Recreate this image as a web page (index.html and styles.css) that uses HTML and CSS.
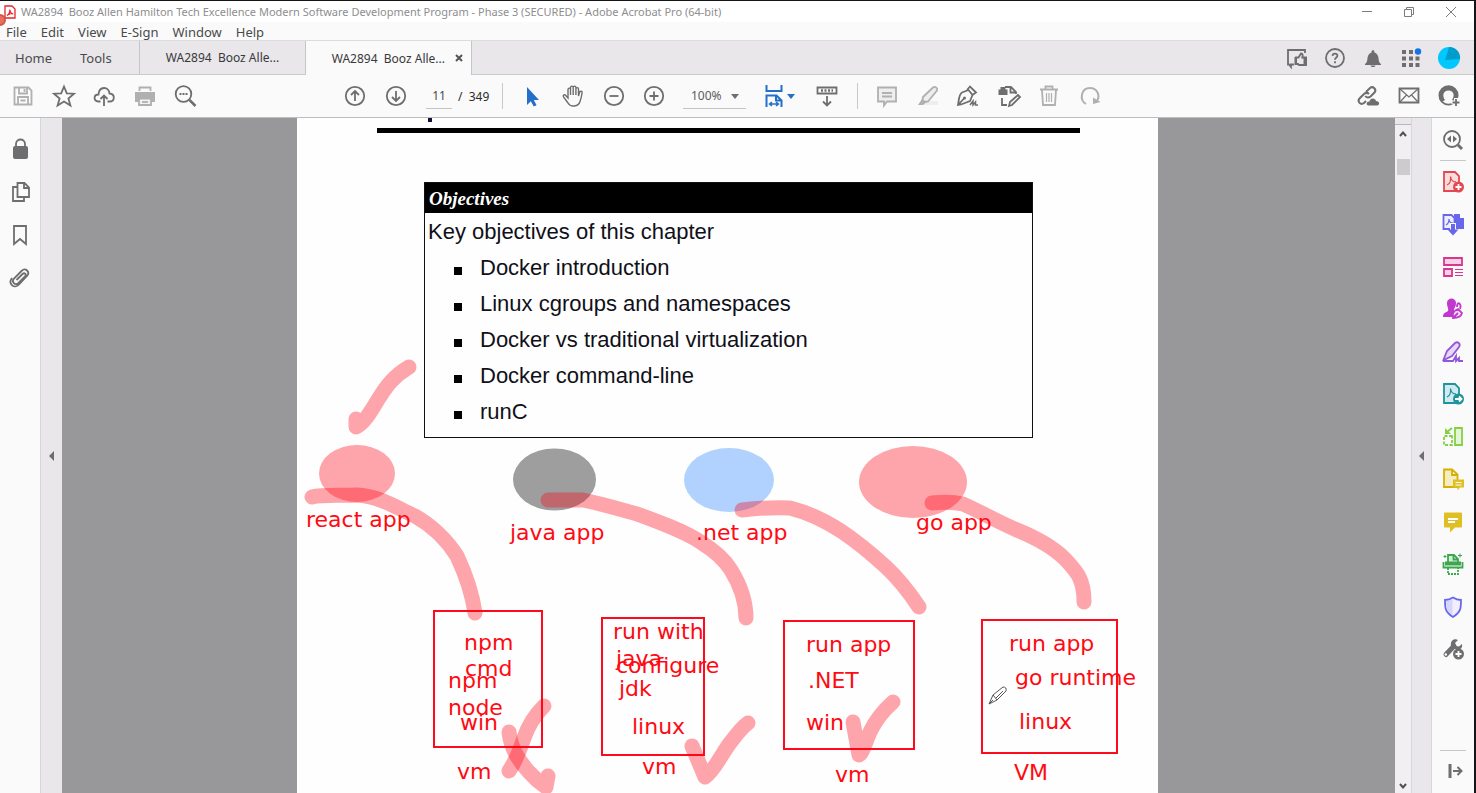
FILE: index.html
```html
<!DOCTYPE html>
<html lang="en">
<head>
<meta charset="utf-8">
<title>WA2894 Booz Allen Hamilton - Adobe Acrobat Pro</title>
<link rel="stylesheet" href="styles.css">
</head>
<body>
<div class="app">
  <header class="titlebar">
    <svg class="app-icon" viewBox="0 0 12 14"><path d="M1 1h7l3 3v9H1z" fill="#fff" stroke="#e5252a" stroke-width="1.3"/><path d="M3 10.500c2-1 3-3.500 2.800-6C6 7 7.500 8.800 9.300 9 7 8.500 4.500 9 3 10.500z" fill="none" stroke="#e5252a" stroke-width="1.200"/></svg>
    <span class="title">WA2894&nbsp; Booz Allen Hamilton Tech Excellence Modern Software Development Program - Phase 3 (SECURED) - Adobe Acrobat Pro (64-bit)</span>
    <div class="window-buttons">
      <button aria-label="Minimize"><svg viewBox="0 0 12 12"><path d="M1 5.500h10"/></svg></button>
      <button aria-label="Restore"><svg viewBox="0 0 12 12"><path d="M1.500 3.500h7v7h-7zM3.500 3V1.500h7v7H9"/></svg></button>
      <button aria-label="Close"><svg viewBox="0 0 12 12"><path d="M1 1l10 10M11 1L1 11"/></svg></button>
    </div>
    <span class="record-dot"></span>
  </header>
  <nav class="menubar">
    <button>File</button><button>Edit</button><button>View</button><button>E-Sign</button><button>Window</button><button>Help</button>
  </nav>
  <div class="tabs">
    <div class="tab-main"><button>Home</button><button>Tools</button></div>
    <button class="tab">WA2894&nbsp; Booz Alle...</button>
    <div class="tab active"><button class="tab-name">WA2894&nbsp; Booz Alle...</button><button class="tab-close" aria-label="Close tab"><svg viewBox="0 0 8 8"><path d="M1 1l6 6M7 1L1 7"/></svg></button></div>
    <div class="account">
      <button aria-label="Feedback"><svg class="icon" viewBox="0 0 24 24"><path d="M9 18.500H6v2.500l-2-2.500H3V4h17v3"/><path d="M11 11.500h2.500L16 7.500c1.800 0 2 1.500 1.300 4H21v7.500h-7l-1-1h-2z"/><path class="solid" d="M9.500 11h2.500v8H9.500zM18.500 11H22v8h-3.500z"/></svg></button>
      <button aria-label="Help"><svg class="icon" viewBox="0 0 24 24"><circle cx="12" cy="12" r="9"/><path d="M9.500 9.800c.3-3 5-2.700 4.900 0 0 1.800-2.400 1.700-2.400 4M12 15.300v2"/></svg></button>
      <button aria-label="Notifications"><svg class="icon" viewBox="0 0 24 24"><path class="solid" d="M4 18c3-2 2-5.500 3-8 .7-2 2-3 3.500-3.500C10.500 3 13.500 3 13.500 6.500 15 7 16.300 8 17 10c1 2.500 0 6 3 8v1H4zM9.500 19.500h5c-.5 2-4.500 2-5 0z"/></svg></button>
      <button aria-label="Apps"><svg class="icon" viewBox="0 0 24 24"><path class="solid" d="M3 4h4v4H3zM10 4h4v4h-4zM3 10.500h4v4H3zM10 10.500h4v4h-4zM16.500 10.500h4v4h-4zM3 17h4v4H3zM10 17h4v4h-4zM16.500 17h4v4h-4z"/><circle cx="19" cy="5.500" r="3.200" fill="#1473e6" stroke="none"/></svg></button>
      <button aria-label="Profile"><svg class="icon" viewBox="0 0 24 24"><circle cx="12" cy="12" r="11" fill="#00c8ff" stroke="none"/><path d="M8 14l3-9c.3-1 .3-2 1-4a11 11 0 0 1 11 12z" fill="#009ccb" stroke="none"/></svg></button>
    </div>
  </div>
  <div class="toolbar">
    <div class="group files">
      <button aria-label="Save"><svg class="icon dim" viewBox="0 0 24 24"><path d="M3.500 3.500h14l3 3v14h-17zM8 4v5.500h8V4M7 20v-7h10v7M9.500 16.500h5M13.500 5v3"/></svg></button>
      <button aria-label="Star"><svg class="icon" viewBox="0 0 24 24"><path d="M12 2.500l2.800 6.800 7.200.4-5.600 4.800 2 7-6.400-4-6.400 4 2-7L2 9.700l7.200-.4z"/></svg></button>
      <button aria-label="Upload"><svg class="icon" viewBox="0 0 24 24"><path d="M8.500 17.500H6.500C1 17 1.500 10.500 6.500 10.500 7 2 17 2 17.500 9.500c6 .5 5.500 8 0 8h-2M12 22V12M8.500 15l3.500-3.500 3.500 3.500"/></svg></button>
      <button aria-label="Print"><svg class="icon dim" viewBox="0 0 24 24"><path d="M6.500 7V3.500h11V7"/><path class="solid" d="M2 8h20v10H2z"/><path d="M6 14.500h12v6.500H6z" fill="#f2f2f2"/><path d="M9 18h6"/></svg></button>
      <button aria-label="Search"><svg class="icon" viewBox="0 0 24 24"><circle cx="10.500" cy="10" r="7.800"/><path d="M16.500 16l6 6" stroke-width="2.500"/><path d="M6.500 10h2M9.500 10h2M12.500 10h2"/></svg></button>
    </div>
    <div class="group pages">
      <button aria-label="Previous page"><svg class="icon" viewBox="0 0 24 24"><circle cx="12" cy="12" r="9.200"/><path d="M12 17V7.500M8 11l4-4 4 4"/></svg></button>
      <button aria-label="Next page"><svg class="icon" viewBox="0 0 24 24"><circle cx="12" cy="12" r="9.200"/><path d="M12 7v9.500M8 13l4 4 4-4"/></svg></button>
    </div>
    <input class="page-input" aria-label="Page" value="11">
    <span class="page-count">/&nbsp; 349</span>
    <span class="divider"></span>
    <div class="group zoom">
      <button aria-label="Select"><svg class="icon" viewBox="0 0 24 24"><path d="M6 3v18l3.800-3.800 3 5.300 2.800-1.300-2.800-5.200H18z" fill="#2470c8" stroke="none"/></svg></button>
      <button aria-label="Pan"><svg class="icon" viewBox="0 0 24 24"><path stroke-width="1.400" d="M7 14V5.500c0-1.800 2.500-1.800 2.500 0V11 3.500c0-1.800 2.700-1.800 2.700 0V11 3.500c0-1.800 2.700-1.800 2.700 0V11 5c0-1.800 2.600-1.800 2.600 0v7l1-3.500c.6-2 3-1.400 2.600.5-.5 3-1 5.500-2.100 8.500-1.500 5.500-9.500 6-12 1.500L2.500 13c-1-2 1.200-3 2.300-1.500z"/></svg></button>
      <button aria-label="Zoom out"><svg class="icon" viewBox="0 0 24 24"><circle cx="12" cy="12" r="9.200"/><path d="M7.500 12h9"/></svg></button>
      <button aria-label="Zoom in"><svg class="icon" viewBox="0 0 24 24"><circle cx="12" cy="12" r="9.200"/><path d="M7.500 12h9M12 7.500v9"/></svg></button>
    </div>
    <div class="zoom-box"><select aria-label="Zoom level"><option>100%</option></select><span class="caret"></span></div>
    <button class="fit" aria-label="Fit width"><svg class="icon" viewBox="0 0 24 24"><path d="M3.500 1v6h15V1M3.500 23V11.500h10l5 5V23M13 11.500v5h5"/><path stroke-width="1.500" d="M7 20h8M9 18l-2.500 2L9 22M13 18l2.500 2-2.500 2"/></svg><span class="caret blue"></span></button>
    <button class="keyboard" aria-label="Scrolling"><svg class="icon" viewBox="0 0 24 24"><path d="M2.500 3.500h19v6h-19zM12 12v9M8 17.500l4 4 4-4"/><path d="M6 6.500h12" stroke-width="2.500" stroke-dasharray="2 1.500"/></svg></button>
    <span class="divider second"></span>
    <div class="group comment">
      <button aria-label="Comment"><svg class="icon dim" viewBox="0 0 24 24"><path d="M3 3.500h18v14H12l-3 4v-4H3z" fill="#eee"/><path d="M7 9h10M7 12.500h10"/></svg></button>
      <button aria-label="Highlight"><svg class="icon dim" viewBox="0 0 24 24"><path d="M9 17h13v4H4z" fill="#eee" stroke="none"/><path d="M7 13L17 3.500c2-1.500 5 .5 4 3L12 17.500l-3 .5-2.500-2z" fill="#eee"/><path class="solid" d="M6 15l4 3.500-3 2.500H2z"/></svg></button>
      <button aria-label="Sign"><svg class="icon" viewBox="0 0 24 24"><path d="M2 21c1-6 1-11 4-12.500L12.500 6l4 5L14 17l-9 3.500zM2 21l6-6.500M11 6l3-3.500 6 6-3.500 2.500"/><circle class="solid" cx="8.500" cy="14" r="1.500"/><path d="M14 21l3-4v4l2.500-3v3H22" stroke-width="1.500"/></svg></button>
      <button aria-label="Edit"><svg class="icon" viewBox="0 0 24 24"><path class="solid" d="M1.500 5.500h9v5.500h-9zM3.500 3h5v2.500h-5z"/><path d="M8 3h6l5 5v2M13.500 3v5.500H19M5 14v7h5"/><path d="M12 22l1-4 8-7 2 2-8 8z" fill="#fafafa"/></svg></button>
      <button aria-label="Delete"><svg class="icon dim" viewBox="0 0 24 24"><path d="M3 5.500h18M8.500 5V2.500h7V5M5 6l1 15h12l1-15"/><path stroke-width="1.200" d="M9.500 9v9M12 9v9M14.500 9v9"/></svg></button>
      <button aria-label="Redo"><svg class="icon dim" viewBox="0 0 24 24"><path d="M8 20C1 16 3 4 12 4c7 0 10.500 7 7 13" stroke-width="2"/><path class="solid" d="M15 13.500v6.500l7.500-2z"/></svg></button>
    </div>
    <div class="group share">
      <button aria-label="Copy link"><svg class="icon" viewBox="0 0 24 24"><path stroke-width="2" d="M10 8l4-4c3-2.500 7 1.500 4.500 4.500l-4 4c-2 1.700-4 1.200-5.200-.5M13 10c-1.500-1.500-3.500-1.200-5 0L3.500 14.500c-2.500 3 1 7 4.500 4.500l2-2"/><path class="solid" d="M12.500 21.500c-3-.5-2-4.500 1-4 .5-4 6-4 6.500-.5 4 0 4 4.500 1 4.500z"/></svg></button>
      <button aria-label="Email"><svg class="icon" viewBox="0 0 24 24"><path d="M2.500 4.500h19v14h-19z"/><path stroke-width="1.200" d="M3 5l9 8 9-8M3 18l6.500-7M21 18l-6.500-7"/></svg></button>
      <button aria-label="Invite"><svg class="icon" viewBox="0 0 24 24"><circle cx="11.500" cy="12" r="8.700"/><path class="solid" d="M8 17c-3.500-4-2.500-10 3.500-10s7 6 3.500 10c1 1 3 .5 4 2l2-6C21 7 17 3 11.500 3S2 7 2 13l3 7c1-2 2.500-2 3-3z" fill-rule="evenodd" visibility="hidden"/><path class="solid" d="M4.500 18.500c.5-2 3-1.500 3.500-2.500-3-4-2-9.500 3.500-9.500S18 12 15 16c.5 1 3 .5 3.500 2.500a10 10 0 1 0-14 0z"/><path d="M19 14v9M14.500 18.500h9" stroke="#fafafa" stroke-width="4"/><path d="M19 15v7M15.500 18.500h7"/></svg></button>
    </div>
  </div>
  <main class="workspace">
    <nav class="side-left">
      <button aria-label="Security"><svg class="icon" viewBox="0 0 24 24"><path class="solid" d="M4 11q0-2 2-2h11q2 0 2 2v9q0 2-2 2H6q-2 0-2-2z"/><path d="M7 10V7c0-6 9-6 9 0v3"/></svg></button>
      <button aria-label="Pages"><svg class="icon" viewBox="0 0 24 24"><path d="M8.500 3h7l4.500 4.500V17H8.500zM15 3v5h5M8 7H4v14h11v-4"/></svg></button>
      <button aria-label="Bookmarks"><svg class="icon" viewBox="0 0 24 24"><path d="M5 3h12v18l-6-5-6 5z"/></svg></button>
      <button aria-label="Attachments"><svg class="icon" viewBox="0 0 24 24"><path d="M7.500 14l6-6c2-2 4.500.5 2.500 2.500L9.500 17c-3.500 3-7.500-1-4.500-4.500l7.500-7.500c4-4 9 1 5.500 5l-8 8.500c-4.500 5-11.500-.5-7-6.500"/></svg></button>
    </nav>
    <button class="gutter left" aria-label="Expand navigation"><span class="arrow"></span></button>
    <div class="viewer">
      <article class="page">
        <hr class="rule">
        <section class="objectives">
          <h2>Objectives</h2>
          <p>Key objectives of this chapter</p>
          <ul>
            <li>Docker introduction</li>
            <li>Linux cgroups and namespaces</li>
            <li>Docker vs traditional virtualization</li>
            <li>Docker command-line</li>
            <li>runC</li>
          </ul>
        </section>
        <svg class="ink" viewBox="297 118 861 675">
          <path d="M428 118h4v4h-4z" fill="#101030"/>
          <ellipse class="red" cx="357" cy="473.500" rx="38" ry="28.500"/>
          <ellipse cx="554.500" cy="479.500" rx="41.500" ry="31" fill="#9e9e9e"/>
          <ellipse cx="729" cy="480" rx="45" ry="32" fill="#b1d2ff"/>
          <ellipse class="red" cx="913" cy="482" rx="54" ry="36"/>
          <g class="box">
            <path d="M434 611h108v136H434zM602 618h102v137H602zM784 621h130v128H784zM982 620h135v133H982z"/>
          </g>
          <g class="label">
            <text x="306" y="527">react app</text><text x="510" y="540">java app</text><text x="696" y="540">.net app</text><text x="916" y="530">go app</text>
            <text x="464" y="650">npm</text><text x="465" y="676">cmd</text><text x="448" y="688">npm</text><text x="448" y="715">node</text><text x="460" y="730">win</text><text x="457" y="779">vm</text>
            <text x="613" y="639">run with</text><text x="616" y="666">java</text><text x="616" y="673">configure</text><text x="619" y="696">jdk</text><text x="632" y="734">linux</text><text x="642" y="774">vm</text>
            <text x="806" y="652">run app</text><text x="808" y="688">.NET</text><text x="806" y="730">win</text><text x="835" y="782">vm</text>
            <text x="1009" y="651">run app</text><text x="1015" y="685">go runtime</text><text x="1019" y="729">linux</text><text x="1014" y="780">VM</text>
          </g>
          <g class="stroke">
            <path d="M356 419v8c9-4 16-18 23-29 6-9 13-21 30-31"/>
            <path d="M312 497c12-3 30-1 45-2 22 1 40 13 58 21 16 9 32 24 42 40 8 17 15 36 18 57"/>
            <path d="M548 500h35c20 4 36 9 54 14 25 9 49 18 65 29 13 8 22 16 29 27 8 13 15 28 15 48"/>
            <path d="M742 510c18-2 33-3 48-2 20 5 34 12 51 23 18 12 33 25 45 36 13 12 23 25 33 40"/>
            <path d="M932 503c10-1 22-1 31 1 18 8 33 17 54 26 17 7 35 16 48 29 11 12 19 19 19 43"/>
            <path d="M544 706c-10 10-16 20-20 32-4 12-9 24-15 33"/>
            <path d="M509 732c1 11 6 25 20 40 7 8 11 11 17 15l2-11"/>
            <path d="M692 746l13 31c9-6 16-22 25-34 7-9 11-15 18-20"/>
            <path d="M853 722l6 33c3 0 7-15 12-25 6-12 13-20 22-28"/>
          </g>
          <path class="pen" d="M989 704l4-9 10-8q4 0 3 4l-9 9zM993 695l4 5M989 704l4-4M996 698l7-7"/>
        </svg>
      </article>
    </div>
    <div class="scrollbar">
      <span class="split"></span>
      <button aria-label="Scroll up"><svg viewBox="0 0 8 6"><path d="M1 5l3-3.500L7 5"/></svg></button>
      <span class="thumb"></span>
      <button class="down" aria-label="Scroll down"><svg viewBox="0 0 8 6"><path d="M1 1l3 3.500L7 1"/></svg></button>
    </div>
    <button class="gutter right" aria-label="Collapse tools"><span class="arrow"></span></button>
    <aside class="side-right">
      <button aria-label="Find tool"><svg class="icon" viewBox="0 0 24 24"><circle cx="11" cy="11" r="8"/><path d="M17 17l4 4" stroke-width="3"/><path class="solid" d="M10 7.500v7L6 11zM12 7.500v7l4-3.500z"/></svg></button>
      <span class="line"></span>
      <div class="tools">
        <button aria-label="Create PDF"><svg class="icon red-tool" viewBox="0 0 24 24"><path class="tint" d="M3 2h11l4 4v15H3z"/><path d="M6 15c3-1 4-5 3.500-8.500C10 10 12 12 15 12" stroke-width="1.300"/><circle class="solid" cx="17.500" cy="17" r="5.500"/><path class="white" d="M14.500 17h6M17.500 14v6"/></svg></button>
        <button aria-label="Combine"><svg class="icon indigo" viewBox="0 0 24 24"><path class="solid" d="M13 2h6v4h4v11H13z"/><path class="tint" d="M2.500 3h8l3 3v11h-11z"/><path d="M5 13c2-1 3-3 3-6 0 3 1.500 4 4 4" stroke-width="1.200"/><path d="M12 11v7" stroke="#fafafa" stroke-width="6"/><path d="M12 12v8" stroke-width="4"/><path class="solid" d="M6.500 17.500h11L12 23.500z"/></svg></button>
        <button aria-label="Organize"><svg class="icon pink" viewBox="0 0 24 24"><path class="tint" d="M3 3h18v7H3zM3 14h8v7H3z"/><path d="M14 14.500h8M14 17.500h8M14 20.500h8" stroke-width="1"/></svg></button>
        <button aria-label="Request signatures"><svg class="icon purple" viewBox="0 0 24 24"><path class="solid" d="M6 6c0-6 9-6 9 0 0 4-2 5-2 7v7H2c0-4 2-4 5-6 1-2-1-4-1-8z"/><path class="tint" d="M12 21c-1-5 2-8 5-9l4 4c-1 4-5 5-9 5zM16 10c0-7 5-3 3 2M12 21l5-5"/></svg></button>
        <button aria-label="Fill and sign"><svg class="icon violet" viewBox="0 0 24 24"><path class="tint" d="M2 21l4-10 8-8c3-2 6 1 4 4l-7 9-8 4z"/><path d="M2 21h10l3-5v5l3-3v3h4"/></svg></button>
        <button aria-label="Export"><svg class="icon teal" viewBox="0 0 24 24"><path class="tint" d="M3 2h11l4 4v15H3z"/><path d="M6 15c3-1 4-5 3.500-8.500C10 10 12 12 15 12" stroke-width="1.300"/><circle class="solid" cx="17.500" cy="17" r="5.500"/><path class="white" d="M14 17h6M18 14.500l2.500 2.500-2.500 2.500"/></svg></button>
        <button aria-label="Page order"><svg class="icon green" viewBox="0 0 24 24"><path class="tint" d="M14 3h7v17h-7z"/><path d="M11 11H3v9h8z" stroke-dasharray="3 1.500"/><path d="M11 3L6 7"/><path class="solid" d="M4 3v6h6z"/></svg></button>
        <button aria-label="Send comments"><svg class="icon gold" viewBox="0 0 24 24"><path class="tint" d="M3 2.500h8l5.500 5V20H3zM11 3v5h5"/><path class="solid" d="M12 12.500h11v8h-4l-2.500 3v-3H12z"/><path class="white thin" d="M14.500 15.500h6M14.500 18h6"/></svg></button>
        <button aria-label="Comment"><svg class="icon gold" viewBox="0 0 24 24"><path class="solid" d="M4 2.500h16q1 0 1 1v13q0 1-1 1h-6l-5 5v-5H4q-1 0-1-1v-13q0-1 1-1z"/><path class="white" d="M7 9h10M7 12h7"/></svg></button>
        <button aria-label="Scan"><svg class="icon leaf" viewBox="0 0 24 24"><path class="tint" d="M7 10V3h6l4 4v3M12.500 3v4.500H17"/><path d="M4 11.500h16" stroke-width="4"/><path d="M2.500 10v5.500h19V10"/><path d="M7 16v6h10v-6" stroke-dasharray="2 1"/><path d="M19 1.500v4M17 3.500h4M4 3v3M2.500 4.500h3" stroke-width="1"/></svg></button>
        <button aria-label="Protect"><svg class="icon indigo" viewBox="0 0 24 24"><path d="M12 2.500c3 2 5 2.500 8 2.500 0 8 0 12-8 17C4 17 4 13 4 5c3 0 5-.5 8-2.500z" fill="#f1efff"/><path d="M11.500 4v16C5 16 5 12 5 6c3 0 4-.5 6.500-2z" fill="#d8d5fb" stroke="none"/></svg></button>
        <button aria-label="More tools"><svg class="icon" viewBox="0 0 24 24"><path d="M5 17.500L13 9" stroke-width="5" stroke-linecap="round"/><path class="solid" d="M10 9c-1-5 3-8 7-6l-3 3 1 3 3 .5 3-2.500c1 4-2 6.500-6 5.500z"/><circle cx="4.800" cy="17.500" r="1.200" fill="#fff" stroke="none"/><circle class="solid" cx="17.500" cy="17" r="5.500"/><path class="white" d="M14.500 17h6M17.500 14v6"/></svg></button>
      </div>
      <span class="line bottom"></span>
      <button class="collapse" aria-label="Collapse"><svg class="icon" viewBox="0 0 24 24"><path d="M9 5v14" stroke-width="3"/><path d="M12 12h8M16.500 8l4 4-4 4" stroke-width="2"/></svg></button>
    </aside>
  </main>
</div>
</body>
</html>
```
FILE: styles.css
```css
* { box-sizing: border-box; }
body { margin: 0; font-family: "Noto Sans", "Open Sans", sans-serif; color: #4a4a4c; }
button { padding: 0; border: 0; background: none; color: inherit; font: inherit; flex: none; }
button svg { display: block; }
.app { display: flex; flex-direction: column; height: 100vh; overflow: hidden; border-top: 1px solid #151518; border-right: 2px solid #151518; background: #fafafa; }

.icon { width: 24px; height: 24px; fill: none; stroke: #6e6e70; stroke-width: 1.8; color: #6e6e70; overflow: visible; }
.icon .solid { fill: currentColor; stroke: none; }
.icon .white { fill: none; stroke: #fff; stroke-width: 1.8; }
.icon .thin { stroke-width: 1; }
.icon.dim { stroke: #b0b0b2; color: #b0b0b2; }
.icon.red-tool { stroke: #e34850; color: #e34850; }
.red-tool .tint { fill: #fbdcdd; }
.icon.indigo { stroke: #6767ec; color: #6767ec; }
.indigo .tint { fill: #eeeefe; }
.icon.pink { stroke: #d83790; color: #d83790; }
.pink .tint { fill: #f7d1e6; }
.icon.purple { stroke: #c038cc; color: #c038cc; }
.purple .tint { fill: #f7e4fa; }
.icon.violet { stroke: #9256d9; color: #9256d9; }
.violet .tint { fill: #e6d8f7; }
.icon.teal { stroke: #1b959a; color: #1b959a; }
.teal .tint { fill: #d2e9f0; }
.icon.green { stroke: #85d044; color: #85d044; }
.green .tint { fill: #e5f6d8; }
.icon.gold { stroke: #d2b200; color: #dfbf24; }
.gold .tint { fill: #f7ebc0; }
.icon.leaf { stroke: #3da74e; color: #3da74e; }
.leaf .tint { fill: #d5f0d9; }

.titlebar { position: relative; display: flex; align-items: center; height: 21px; padding: 0 17px 0 4px; background: #fff; flex: none; }
.app-icon { width: 12px; height: 14px; margin-right: 5px; flex: none; }
.title { font-size: 11px; color: #8e8e90; white-space: nowrap; }
.window-buttons { display: flex; gap: 30px; margin-left: auto; }
.window-buttons svg { width: 12px; height: 12px; fill: none; stroke: #7c7c7e; }
.record-dot { position: absolute; left: -6px; top: 13px; width: 12px; height: 12px; border-radius: 50%; background: #e8705c; border: 2px solid #cf5745; }
.menubar { display: flex; gap: 14px; height: 19px; padding-left: 6px; border-bottom: 1px solid #dcdcde; font-size: 13px; line-height: 20px; flex: none; }
.tabs { display: flex; height: 34px; border-bottom: 1px solid #cbcacc; background: #e9e7ea; font-size: 13px; flex: none; }
.tab-main { display: flex; gap: 28px; width: 140px; padding-left: 15px; border-right: 1px solid #c6c6c8; }
.tab { width: 166px; border-right: 1px solid #c6c6c8; font-size: 12px; color: #39393b; }
.tab.active { display: flex; align-items: center; justify-content: flex-end; gap: 10px; height: 34px; padding-right: 8px; background: #fafafa; }
.tab-close svg { width: 8px; height: 8px; stroke: #555; stroke-width: 2; }
.account { display: flex; justify-content: space-between; align-items: center; width: 176px; margin: 0 13px 0 auto; }

.toolbar { display: flex; align-items: center; height: 43px; padding: 0 13px 0 11px; border-bottom: 1px solid #bdbdbf; flex: none; }
.group { display: flex; justify-content: space-between; flex: none; }
.files { width: 186px; margin-right: 146px; }
.pages { width: 65px; }
.page-input { width: 26px; height: 26px; margin: 0 6px 0 18px; padding: 0; border: 0; border-bottom: 1px solid #c4c4c6; background: none; text-align: center; color: #4a4a4c; font: 12px "Noto Sans", sans-serif; }
.page-count { width: 44px; font-size: 12px; color: #2c2c2e; white-space: nowrap; }
.divider { width: 1px; height: 26px; margin-right: 18px; background: #c8c8ca; flex: none; }
.zoom { width: 145px; }
.zoom-box { position: relative; margin: 0 17px; }
.zoom-box select { display: block; width: 63px; height: 26px; padding: 0 8px; border: 0; border-bottom: 1px solid #c4c4c6; border-radius: 0; background: none; appearance: none; color: #5c5c5e; font: 12px "Noto Sans", sans-serif; }
.caret { border: 4px solid transparent; border-top: 5px solid #6e6e70; border-bottom: 0; }
.zoom-box .caret { position: absolute; right: 7px; top: 11px; }
.fit { display: flex; align-items: center; width: 52px; }
.fit .icon { stroke: #2470c8; stroke-width: 2; }
.caret.blue { border-top-color: #2470c8; }
.second { margin: 0 17px 0 18px; }
.comment { width: 227px; }
.share { width: 105px; margin-left: auto; }

.workspace { display: flex; flex: 1; min-height: 0; }
.side-left { display: flex; flex-direction: column; align-items: center; gap: 19px; width: 41px; padding: 19px 0 0 1px; border-right: 1px solid #d6d6d8; flex: none; }
.gutter { display: flex; align-items: center; justify-content: center; width: 21px; background: #e9e7ea; }
.gutter.right { border-left: 1px solid #d8d6da; border-right: 1px solid #d8d6da; }
.arrow { border: 5px solid transparent; border-right: 5px solid #6e6e70; border-left: 0; }
.viewer { flex: 1; min-width: 0; padding-right: 2px; overflow: hidden; background: #98989a; }
.page { position: relative; width: 861px; min-height: 100%; margin: 0 auto; padding: 10px 0; background: #fefefe; }
.rule { height: 5px; margin: 0 78px 49px 80px; border: 0; background: #000; }
.objectives { margin: 0 125px 0 127px; padding-bottom: 7px; border: 1px solid #111; color: #101018; font-family: "Liberation Sans", sans-serif; font-size: 22px; line-height: 36px; }
.objectives h2 { margin: 0 0 1px; padding: 1px 0 0 4px; background: #000; color: #fff; font: italic bold 19px/29px "Liberation Serif", serif; }
.objectives p { margin: 0; padding-left: 3px; }
.objectives ul { margin: 0; padding: 0 0 0 29px; list-style: none; }
.objectives li { display: flex; align-items: center; gap: 18px; }
.objectives li::before { content: ""; width: 8px; height: 8px; margin-top: 6px; background: #000; }
.ink { position: absolute; left: 0; top: 0; width: 861px; height: 675px; }
.ink .red { fill: #ff0010; fill-opacity: .35; }
.box path { fill: none; stroke: #ff0a1c; stroke-width: 2; }
.label { fill: #ff0a12; font: 22px "DejaVu Sans", sans-serif; }
.stroke path { fill: none; stroke: #ff0010; stroke-opacity: .35; stroke-width: 15; stroke-linecap: round; stroke-linejoin: round; }
.pen { fill: #fff; stroke: #555; }

.scrollbar { display: flex; flex-direction: column; align-items: center; width: 16px; background: #f1eff2; flex: none; }
.scrollbar svg { width: 8px; height: 6px; fill: none; stroke: #505052; stroke-width: 2; }
.split { width: 16px; height: 7px; margin-bottom: 6px; border-bottom: 1px solid #b8b8ba; background: #e9e7ea; }
.thumb { width: 13px; height: 16px; margin-top: 22px; background: #cdcbce; }
.down { margin: auto 0 4px; }
.side-right { display: flex; flex-direction: column; align-items: center; width: 42px; padding-top: 10px; flex: none; }
.line { width: 26px; height: 1px; margin: 8px 0 9px; background: #c8c8ca; flex: none; }
.tools { display: flex; flex-direction: column; justify-content: space-between; height: 491px; flex: none; }
.line.bottom { margin: auto 0 8px; }
.collapse { margin-bottom: 10px; }
```
